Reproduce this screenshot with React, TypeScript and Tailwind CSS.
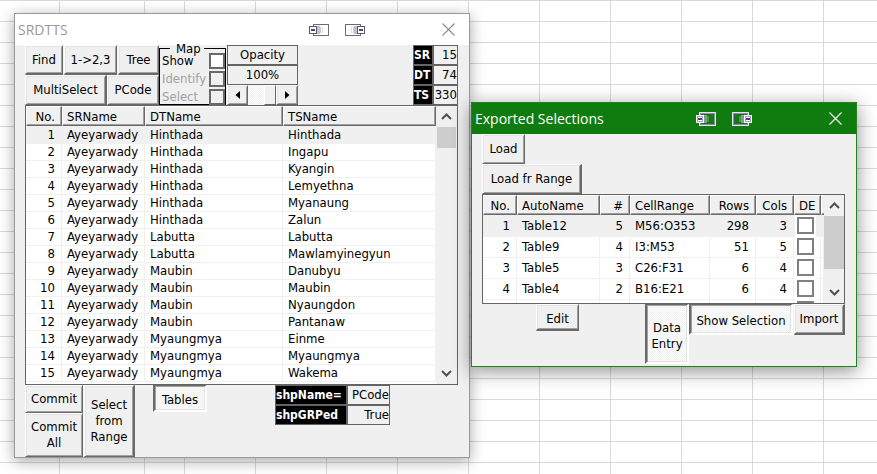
import type { ReactNode } from "react";

const UI_FONT = "font-['DejaVu_Sans_Condensed','Noto_Sans',sans-serif]";
const DITHER =
  "bg-[repeating-conic-gradient(#ffffff_0_25%,#efefef_0_50%)] bg-[length:2px_2px]";

/* ---------- controls ---------- */

function PushButton({ className = "", children }: { className?: string; children: ReactNode }) {
  return (
    <button
      type="button"
      className={`border border-t-white border-l-white border-r-[#696969] border-b-[#696969] bg-[#f0f0f0] text-center leading-4 whitespace-nowrap shadow-[inset_1px_1px_#e3e3e3,inset_-1px_-1px_#a0a0a0] ${className}`}
    >
      {children}
    </button>
  );
}

function PressedButton({ className = "", children }: { className?: string; children: ReactNode }) {
  return (
    <button
      type="button"
      aria-pressed="true"
      className={`border-t border-r-2 border-b-2 border-l-2 border-t-[#696969] border-r-white border-b-white border-l-[#696969] pt-1 text-center leading-4 whitespace-nowrap shadow-[inset_1px_1px_#a0a0a0,inset_-1px_-1px_#e3e3e3] ${DITHER} ${className}`}
    >
      {children}
    </button>
  );
}

function Field({
  id,
  label,
  value,
  labelClass,
  valueClass,
}: {
  id: string;
  label: string;
  value: string;
  labelClass: string;
  valueClass: string;
}) {
  return (
    <div className="flex h-5">
      <label
        htmlFor={id}
        className={`border border-[#646464] bg-black text-[12px] font-bold leading-[18px] whitespace-nowrap text-white ${labelClass}`}
      >
        {label}
      </label>
      <input
        id={id}
        readOnly
        value={value}
        className={`border border-[#646464] bg-[#f0f0f0] text-right leading-[18px] outline-none ${valueClass}`}
      />
    </div>
  );
}

function MapOption({ label, disabled = false }: { label: string; disabled?: boolean }) {
  return (
    <label
      className={`flex h-[18px] items-center justify-between pl-0.5 leading-3 ${disabled ? "text-[#a0a0a0]" : "text-black"}`}
    >
      {label}
      <input
        type="checkbox"
        disabled={disabled}
        className={`size-4 shrink-0 appearance-none border-2 border-[#696969] ${disabled ? "bg-[#f0f0f0]" : "bg-white"}`}
      />
    </label>
  );
}

function Chevron({ down = false }: { down?: boolean }) {
  return (
    <svg width="11" height="7" viewBox="0 0 11 7" fill="none" stroke="#505050" strokeWidth="2">
      <path d={down ? "M1 1L5.5 5.5L10 1" : "M1 6L5.5 1.5L10 6"} />
    </svg>
  );
}

function ScrollBar({ className, thumb }: { className: string; thumb: string }) {
  return (
    <div className={`flex flex-col bg-[#f0f0f0] ${className}`}>
      <button type="button" aria-label="Scroll up" className="flex h-[21px] items-center justify-center">
        <Chevron />
      </button>
      <div className="flex-1">
        <div className={`bg-[#cdcdcd] ${thumb}`} />
      </div>
      <button type="button" aria-label="Scroll down" className="flex h-[22px] items-center justify-center">
        <Chevron down />
      </button>
    </div>
  );
}

/* ---------- window chrome ---------- */

function SnapIcon({ right = false, light = false }: { right?: boolean; light?: boolean }) {
  if (light) {
    return (
      <svg
        width="20"
        height="14"
        viewBox="0 0 20 14"
        shapeRendering="crispEdges"
        className={right ? "" : "-scale-x-100"}
      >
        <rect x="0.5" y="0.5" width="16" height="13" fill="#107c10" stroke="#e6e6f0" />
        <rect x="1.5" y="1.5" width="14" height="11" fill="none" stroke="#8a8aa2" />
        <rect x="2.5" y="2.5" width="12" height="9" fill="none" stroke="#47506a" opacity="0.6" />
        <rect x="7" y="4" width="2" height="6" fill="#b0c8b4" opacity="0.35" />
        <rect x="9" y="3" width="3" height="8" fill="#b0b8bc" opacity="0.65" />
        <rect x="12" y="3" width="8" height="8" fill="#ffffff" />
        <rect x="13.5" y="4.5" width="5" height="5" fill="#ffffff" stroke="#a8a4c0" />
        <rect x="14" y="6" width="4" height="2" fill="#47406a" />
      </svg>
    );
  }
  return (
    <svg
      width="20"
      height="14"
      viewBox="0 0 20 14"
      shapeRendering="crispEdges"
      className={right ? "" : "-scale-x-100"}
    >
      <rect x="0.5" y="1.5" width="15" height="11" fill="#ffffff" stroke="#6a6a7c" />
      <rect x="6" y="4" width="1" height="6" fill="#9a9aa8" opacity="0.35" />
      <rect x="8" y="4" width="1" height="6" fill="#9a9aa8" opacity="0.55" />
      <rect x="9" y="3" width="3" height="8" fill="#9a9aa8" opacity="0.6" />
      <rect x="12.5" y="3.5" width="7" height="7" fill="#ffffff" stroke="#5a5a70" />
      <rect x="14" y="6" width="4" height="2" fill="#4a4a60" />
    </svg>
  );
}

function TitleBar({ title, active = false }: { title: string; active?: boolean }) {
  return (
    <header
      className={`flex h-[31px] items-center pr-3.5 pl-[3px] font-['Open_Sans','Noto_Sans',sans-serif] text-[14px] ${
        active ? "bg-[#107c10] text-white" : "bg-white text-[#999999]"
      }`}
    >
      <h2 className="flex-1 leading-5">{title}</h2>
      <button type="button" aria-label="Snap left" className="mr-4">
        <SnapIcon light={active} />
      </button>
      <button type="button" aria-label="Snap right" className="mr-[77px]">
        <SnapIcon right light={active} />
      </button>
      <button type="button" aria-label="Close">
        <svg width="13" height="13" viewBox="0 0 13 13" stroke={active ? "#ffffff" : "#8c8c8c"} strokeWidth="1.1">
          <path d="M0.5 0.5L12.5 12.5M12.5 0.5L0.5 12.5" />
        </svg>
      </button>
    </header>
  );
}

/* ---------- list boxes ---------- */

type Column = { name: string; width: string; right?: boolean };

function HeadRow({ columns }: { columns: Column[] }) {
  return (
    <thead>
      <tr className="h-[21px] bg-[#f0f0f0]">
        {columns.map((c, i) => (
          <th key={i} className="p-0 align-top font-normal">
            <div
              className={`h-5 border-t border-r border-b border-l border-t-white border-r-[#696969] border-b-[#696969] border-l-white leading-[19px] whitespace-nowrap shadow-[inset_-1px_-1px_#a0a0a0] ${
                c.right ? "pr-1.5 text-right" : "pl-1 text-left"
              }`}
            >
              {c.name}
            </div>
          </th>
        ))}
      </tr>
    </thead>
  );
}

function Cols({ columns }: { columns: Column[] }) {
  return (
    <colgroup>
      {columns.map((c, i) => (
        <col key={i} className={c.width} />
      ))}
    </colgroup>
  );
}

const CELL = "border-r border-b border-[#f0f0f0] py-0 whitespace-nowrap";

const placeColumns: Column[] = [
  { name: "No.", width: "w-9", right: true },
  { name: "SRName", width: "w-[83px]" },
  { name: "DTName", width: "w-[138px]" },
  { name: "TSName", width: "w-[153px]" },
];

const places: [string, string][] = [
  ["Hinthada", "Hinthada"],
  ["Hinthada", "Ingapu"],
  ["Hinthada", "Kyangin"],
  ["Hinthada", "Lemyethna"],
  ["Hinthada", "Myanaung"],
  ["Hinthada", "Zalun"],
  ["Labutta", "Labutta"],
  ["Labutta", "Mawlamyinegyun"],
  ["Maubin", "Danubyu"],
  ["Maubin", "Maubin"],
  ["Maubin", "Nyaungdon"],
  ["Maubin", "Pantanaw"],
  ["Myaungmya", "Einme"],
  ["Myaungmya", "Myaungmya"],
  ["Myaungmya", "Wakema"],
];

function PlaceList() {
  return (
    <div className="flex h-[280px] overflow-hidden border border-[#646464] bg-white">
      <div className="min-w-0 flex-1 overflow-hidden">
        <table className="w-full table-fixed border-separate border-spacing-0">
          <Cols columns={placeColumns} />
          <HeadRow columns={placeColumns} />
          <tbody>
            {places.map(([dt, ts], i) => (
              <tr key={ts} className={`h-[17px] leading-4 ${i === 0 ? "bg-[#f0f0f0]" : ""}`}>
                <td className={`${CELL} pr-1.5 pl-0 text-right`}>{i + 1}</td>
                <td className={`${CELL} pr-0 pl-[5px]`}>Ayeyarwady</td>
                <td className={`${CELL} pr-0 pl-[5px]`}>{dt}</td>
                <td className={`${CELL} pr-0 pl-[5px]`}>{ts}</td>
              </tr>
            ))}
          </tbody>
        </table>
      </div>
      <ScrollBar className="w-[21px] px-px" thumb="h-[21px]" />
    </div>
  );
}

const tableColumns: Column[] = [
  { name: "No.", width: "w-[34px]", right: true },
  { name: "AutoName", width: "w-[83px]" },
  { name: "#", width: "w-[30px]", right: true },
  { name: "CellRange", width: "w-20" },
  { name: "Rows", width: "w-[46px]", right: true },
  { name: "Cols", width: "w-[38px]", right: true },
  { name: "DE", width: "w-[27px]" },
  { name: "", width: "w-[3px]" },
];

const tables: [string, number, string, number, number][] = [
  ["Table12", 5, "M56:O353", 298, 3],
  ["Table9", 4, "I3:M53", 51, 5],
  ["Table5", 3, "C26:F31", 6, 4],
  ["Table4", 2, "B16:E21", 6, 4],
];

function DataEntryBox({ label }: { label: string }) {
  return (
    <input
      type="checkbox"
      aria-label={label}
      className="mt-px ml-[3px] block size-[17px] appearance-none border-2 border-[#808080] bg-white outline-2 outline-white"
    />
  );
}

function ExportList() {
  return (
    <div className="flex h-[110px] overflow-hidden border border-[#646464] bg-white">
      <div className="min-w-0 flex-1 overflow-hidden">
        <table className="w-full table-fixed border-separate border-spacing-0">
          <Cols columns={tableColumns} />
          <HeadRow columns={tableColumns} />
          <tbody>
            {tables.map(([name, count, range, rows, cols], i) => (
              <tr key={name} className={`h-[21px] leading-5 ${i === 0 ? "bg-[#f0f0f0]" : ""}`}>
                <td className={`${CELL} pr-1.5 pl-0 text-right`}>{i + 1}</td>
                <td className={`${CELL} pr-0 pl-[5px]`}>{name}</td>
                <td className={`${CELL} pr-1.5 pl-0 text-right`}>{count}</td>
                <td className={`${CELL} pr-0 pl-[5px]`}>{range}</td>
                <td className={`${CELL} pr-1.5 pl-0 text-right`}>{rows}</td>
                <td className={`${CELL} pr-1.5 pl-0 text-right`}>{cols}</td>
                <td className={`${CELL} px-0 align-top`}>
                  <DataEntryBox label={`Data entry for ${name}`} />
                </td>
                <td className={`${CELL} px-0`} />
              </tr>
            ))}
            <tr className="h-[21px]">
              {tableColumns.map((c, i) => (
                <td key={i} className={`${CELL} px-0 align-top`}>
                  {c.name === "DE" && <DataEntryBox label="Data entry for new row" />}
                </td>
              ))}
            </tr>
          </tbody>
        </table>
      </div>
      <ScrollBar className="w-5" thumb="h-[53px]" />
    </div>
  );
}

/* ---------- windows ---------- */

function OpacityControl() {
  return (
    <div className="ml-px w-[71px]">
      <div className="h-5 border border-[#646464] text-center leading-[18px]">
        <label htmlFor="opacity">Opacity</label>
      </div>
      <div className="h-5 border border-[#646464] text-center leading-[18px]">100%</div>
      <div className="flex h-5">
        <PushButton className="flex w-[21px] items-center justify-center">
          <svg width="5" height="8" viewBox="0 0 5 8" aria-label="Decrease">
            <path d="M5 0V8L0.5 4Z" />
          </svg>
        </PushButton>
        <input
          id="opacity"
          type="range"
          min={0}
          max={100}
          defaultValue={100}
          className={`h-5 min-w-0 flex-1 appearance-none [&::-webkit-slider-thumb]:h-5 [&::-webkit-slider-thumb]:w-3 [&::-webkit-slider-thumb]:appearance-none [&::-webkit-slider-thumb]:border [&::-webkit-slider-thumb]:border-t-white [&::-webkit-slider-thumb]:border-r-[#696969] [&::-webkit-slider-thumb]:border-b-[#696969] [&::-webkit-slider-thumb]:border-l-white [&::-webkit-slider-thumb]:bg-[#f0f0f0] ${DITHER}`}
        />
        <PushButton className="flex w-[22px] items-center justify-center">
          <svg width="5" height="8" viewBox="0 0 5 8" aria-label="Increase">
            <path d="M0 0V8L4.5 4Z" />
          </svg>
        </PushButton>
      </div>
    </div>
  );
}

function PlacesWindow() {
  return (
    <section className="absolute top-[13px] left-3.5 w-[456px] border border-[#999999] bg-[#f0f0f0] shadow-[0_3px_14px_rgba(0,0,0,0.35)]">
      <TitleBar title="SRDTTS" />
      <div className="pr-[11px] pl-2.5">
        <div className="flex h-[60px]">
          <div className="w-[134px]">
            <div className="flex h-[30px] gap-px">
              <PushButton className="w-[38px] border-b-2">Find</PushButton>
              <PushButton className="w-[53px] border-b-2">1-&gt;2,3</PushButton>
              <PushButton className="w-[41px] border-b-2">Tree</PushButton>
            </div>
            <div className="flex h-[30px]">
              <PushButton className="w-[82px] border-r-2">MultiSelect</PushButton>
              <PushButton className="w-[52px]">PCode</PushButton>
            </div>
          </div>
          <fieldset className="w-[67px] border border-black">
            <legend className="ml-2.5 h-[7px] w-[34px] pl-1.5 leading-[8px]">Map</legend>
            <MapOption label="Show" />
            <MapOption label="Identify" disabled />
            <MapOption label="Select" disabled />
          </fieldset>
          <OpacityControl />
          <div className="ml-auto">
            <Field id="sr" label="SR" value="15" labelClass="w-5" valueClass="w-[25px]" />
            <Field id="dt" label="DT" value="74" labelClass="w-5" valueClass="w-[25px]" />
            <Field id="ts" label="TS" value="330" labelClass="w-5" valueClass="w-[25px]" />
          </div>
        </div>
        <PlaceList />
        <div className="flex h-[72px] items-start">
          <div className="flex w-[58px] flex-col">
            <PushButton className="h-7">Commit</PushButton>
            <PushButton className="h-11">
              Commit
              <br />
              All
            </PushButton>
          </div>
          <PushButton className="ml-px h-[72px] w-[51px] border-r-2">
            Select
            <br />
            from
            <br />
            Range
          </PushButton>
          <PressedButton className="ml-[18px] h-[27px] w-[54px]">Tables</PressedButton>
          <div className="ml-[68px]">
            <Field id="shp-name" label="shpName=" value="PCode" labelClass="w-[72px]" valueClass="w-[43px]" />
            <Field id="shp-grped" label="shpGRPed" value="True" labelClass="w-[72px]" valueClass="w-[43px]" />
          </div>
        </div>
      </div>
    </section>
  );
}

function ExportWindow() {
  return (
    <section className="absolute top-[102px] left-[471px] w-[386px] border border-[#1e841e] bg-[#f0f0f0] shadow-[0_4px_18px_rgba(0,0,0,0.45)]">
      <TitleBar title="Exported Selections" active />
      <div className="pr-[11px] pb-0.5 pl-2.5">
        <div className="flex flex-col items-start">
          <PushButton className="h-[30px] w-[43px]">Load</PushButton>
          <PushButton className="h-[30px] w-[100px] border-r-2">Load fr Range</PushButton>
        </div>
        <ExportList />
        <div className="flex items-start">
          <PushButton className="ml-[54px] h-[27px] w-[43px] border-b-2 pt-1">Edit</PushButton>
          <PressedButton className="ml-auto h-[60px] w-11">
            Data
            <br />
            Entry
          </PressedButton>
          <PressedButton className="h-[31px] w-[104px]">Show Selection</PressedButton>
          <PushButton className="ml-px h-[31px] w-[51px] border-r-2 border-b-2">Import</PushButton>
        </div>
      </div>
    </section>
  );
}

/* ---------- worksheet behind the windows ---------- */

const sheetColumns = ["w-[60px]", "w-[85px]", "w-10", ...Array<string>(24).fill("w-[71px]")];

function Sheet() {
  return (
    <div className="flex h-full overflow-hidden bg-[linear-gradient(#d9d9d9_1px,transparent_1px)] bg-[length:100%_21px]">
      {sheetColumns.map((w, i) => (
        <div key={i} className={`shrink-0 border-r border-[#d9d9d9] ${w}`} />
      ))}
    </div>
  );
}

export default function App() {
  return (
    <main className={`relative h-screen overflow-hidden bg-white text-[13px] text-black ${UI_FONT}`}>
      <Sheet />
      <PlacesWindow />
      <ExportWindow />
    </main>
  );
}
